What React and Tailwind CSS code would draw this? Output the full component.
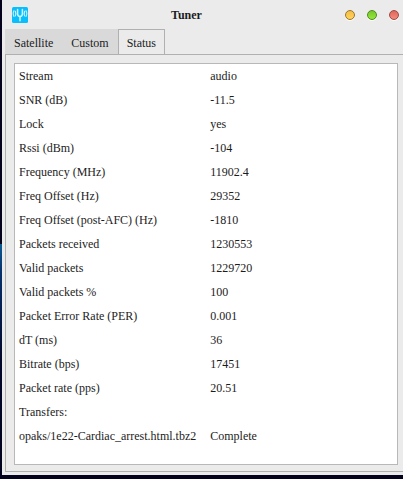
import React, { useState } from 'react'

const tabs = ['Satellite', 'Custom', 'Status']

const rows = [
  { label: 'Stream', value: 'audio' },
  { label: 'SNR (dB)', value: '-11.5' },
  { label: 'Lock', value: 'yes' },
  { label: 'Rssi (dBm)', value: '-104' },
  { label: 'Frequency (MHz)', value: '11902.4' },
  { label: 'Freq Offset (Hz)', value: '29352' },
  { label: 'Freq Offset (post-AFC) (Hz)', value: '-1810' },
  { label: 'Packets received', value: '1230553' },
  { label: 'Valid packets', value: '1229720' },
  { label: 'Valid packets %', value: '100' },
  { label: 'Packet Error Rate (PER)', value: '0.001' },
  { label: 'dT (ms)', value: '36' },
  { label: 'Bitrate (bps)', value: '17451' },
  { label: 'Packet rate (pps)', value: '20.51' },
  { label: 'Transfers:', value: '' },
  { label: 'opaks/1e22-Cardiac_arrest.html.tbz2', value: 'Complete' },
]

const TunerIcon = () => (
  <svg className="size-4" viewBox="0 0 16 16" fill="none" aria-hidden="true">
    <rect width="16" height="16" rx="1.5" fill="#08bffc" />
    <path d="M5.6 2.6v4.2c0 1.7.9 2.7 2.4 2.7s2.4-1 2.4-2.7V2.6M8 9.5v4.3" stroke="#d6f5ff" strokeWidth="1.5" strokeLinecap="round" />
    <path d="M3.3 4.3c.6 1.4.6 3.2 0 4.6M12.7 4.3c-.6 1.4-.6 3.2 0 4.6" stroke="#d6f5ff" strokeWidth="1.1" strokeLinecap="round" />
    <path d="M2 3.7c-1 1.8-1 4 0 5.8M14 3.7c1 1.8 1 4 0 5.8" stroke="#c4f0ff" strokeWidth="1.1" strokeLinecap="round" />
  </svg>
)

const TitleBar = () => (
  <header className="flex h-[29px] items-center pr-1 pl-2.5">
    <TunerIcon />
    <h1 className="flex-1 text-center font-bold">Tuner</h1>
    <div className="flex gap-3">
      <button type="button" aria-label="Minimize" className="size-2.5 rounded-full border border-[#9c7429] bg-linear-to-b from-[#f5bd45] to-[#ffd45c] shadow-[0_1px_0_#fff]" />
      <button type="button" aria-label="Maximize" className="size-2.5 rounded-full border border-[#4c8a1c] bg-linear-to-b from-[#78c62c] to-[#96e83c] shadow-[0_1px_0_#fff]" />
      <button type="button" aria-label="Close" className="size-2.5 rounded-full border border-[#9c4840] bg-linear-to-b from-[#e0675c] to-[#f58a7c] shadow-[0_1px_0_#fff]" />
    </div>
  </header>
)

const App = () => {
  const [active, setActive] = useState('Status')

  return (
    <div className="flex min-h-screen flex-col bg-[linear-gradient(to_bottom,#04021c_51%,#0c5a94_51%,#06306c_57%,#03072c_75%,#02021e_100%)] pb-1 pl-0.5 font-['Liberation_Serif',serif] text-xs text-[#1c1c1c]">
      <main className="flex flex-1 flex-col bg-[#ebebeb] pb-[3px]">
        <TitleBar />
        <div className="flex flex-1 flex-col pl-[3px]">
          <div role="tablist" className="flex h-[25px]">
            {tabs.map((tab) => (
              <button
                key={tab}
                type="button"
                role="tab"
                aria-selected={active === tab}
                onClick={() => setActive(tab)}
                className={active === tab
                  ? '-mb-px border border-b-0 border-[#b0b0b0] bg-[#ebebeb] px-2'
                  : 'bg-[#d9d9d9] px-[9px] pt-[3px]'}
              >
                {tab}
              </button>
            ))}
          </div>
          <section role="tabpanel" className="flex flex-1 flex-col border border-r-0 border-[#b0b0b0] pt-2 pr-[5px] pb-1.5 pl-2">
            <div className="flex-1 border border-[#b8b8b8] bg-white pb-4 pl-1">
              <table className="w-full">
                <tbody>
                  {rows.map((row) => (
                    <tr key={row.label} className="h-6">
                      <th scope="row" className="pr-3.5 text-left font-normal whitespace-nowrap">{row.label}</th>
                      <td className="w-full">{row.value}</td>
                    </tr>
                  ))}
                </tbody>
              </table>
            </div>
          </section>
        </div>
      </main>
    </div>
  )
}

export default App
